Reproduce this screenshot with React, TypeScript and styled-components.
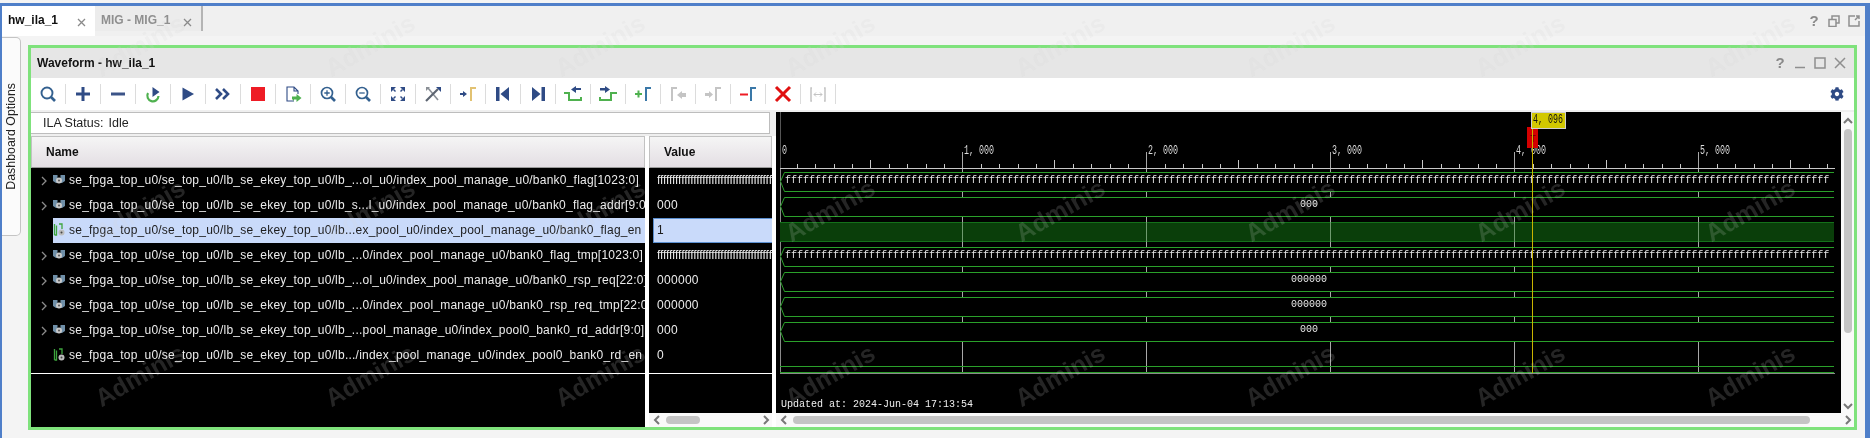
import React from "react";
import styled, { createGlobalStyle } from "styled-components";
import { FaCog } from "react-icons/fa";

const Global = createGlobalStyle`
  html, body { margin: 0; padding: 0; background: #f4f4f4; }
  body { font-family: "Liberation Sans", Arial, sans-serif; overflow: hidden; }
  * { box-sizing: border-box; }
`;

const Page = styled.div`
  position: relative;
  width: 1870px;
  height: 438px;
  padding-top: 3px;
  overflow: hidden;
  background: #f4f4f4;
`;
const Frame = styled.div`
  height: 435px;
  display: flex;
  flex-direction: column;
  border-top: 3px solid #4f7fc9;
  border-left: 2px solid #4f7fc9;
  border-right: 5px solid #4f7fc9;
`;
const TabBar = styled.div`
  height: 30px;
  flex: none;
  display: flex;
  align-items: flex-start;
  background: #f0f0f0;
`;
const Tab = styled.div<{ $active?: boolean }>`
  height: ${(p) => (p.$active ? "30px" : "25px")};
  width: ${(p) => (p.$active ? "93px" : "108px")};
  display: flex;
  align-items: flex-start;
  justify-content: space-between;
  padding: 7px 9px 0 6px;
  font-size: 12px;
  font-weight: 700;
  line-height: 14px;
  color: ${(p) => (p.$active ? "#111" : "#8f8f8f")};
  background: ${(p) => (p.$active ? "#fff" : "#ececec")};
  border-right: ${(p) => (p.$active ? "0" : "2px solid #b4b4b4")};
`;
const TabClose = styled.svg`
  width: 9px;
  height: 9px;
  margin-top: 5px;
  stroke: #8a8a8a;
  stroke-width: 1.3;
  fill: none;
`;
const WindowTools = styled.div<{ $gap: number }>`
  margin-left: auto;
  display: flex;
  align-items: center;
  gap: ${(p) => p.$gap}px;
  color: #8a8a8a;
`;
const BarTools = styled(WindowTools)`
  height: 30px;
  padding-right: 5px;
`;
const HelpMark = styled.span`
  width: 12px;
  text-align: center;
  font-size: 15px;
  font-weight: 700;
  line-height: 16px;
  color: #8a8a8a;
`;
const WinIcon = styled.svg`
  width: 12px;
  height: 12px;
  fill: none;
  stroke: #8f8f8f;
  stroke-width: 1.5;
`;
const Body = styled.div`
  flex: 1;
  min-height: 0;
  display: flex;
  background: #f4f4f4;
`;
const SideStrip = styled.div`
  width: 26px;
  flex: none;
  padding-top: 1px;
`;
const SideTab = styled.div`
  width: 19px;
  height: 199px;
  display: flex;
  align-items: center;
  justify-content: center;
  background: #fbfbfb;
  border: 1px solid #c4c4c4;
  border-left: 0;
  border-radius: 0 5px 5px 0;
`;
const SideLabel = styled.span`
  writing-mode: vertical-rl;
  transform: rotate(180deg);
  font-size: 12.4px;
  line-height: 15px;
  color: #222;
`;
const PanelSlot = styled.div`
  flex: 1;
  min-width: 0;
  padding: 9px 8px 8px 0;
`;
const Panel = styled.div`
  height: 385px;
  width: 1829px;
  display: flex;
  flex-direction: column;
  border: 3px solid #7fe27c;
  background: #fff;
`;
const PanelHeader = styled.div`
  height: 30px;
  flex: none;
  display: flex;
  align-items: center;
  padding: 0 8px 0 6px;
  background: #e6e6e6;
  font-size: 12px;
  font-weight: 700;
  color: #111;
`;
const PanelTools = styled(WindowTools)``;
const Toolbar = styled.div`
  height: 32px;
  flex: none;
  display: flex;
  align-items: center;
  background: #fff;
  padding-right: 10px;
`;
const ToolSlot = styled.div`
  width: 35px;
  height: 20px;
  flex: none;
  display: flex;
  align-items: center;
  justify-content: center;
  border-right: 1px solid #dcdcdc;
`;
const ToolIcon = styled.svg`
  width: 20px;
  height: 20px;
  display: block;
`;
const Gear = styled.div`
  margin-left: auto;
  display: flex;
  color: #2f4b85;
`;
const Content = styled.div`
  flex: 1;
  min-height: 0;
  display: flex;
  background: #efefef;
`;
const SignalPane = styled.div`
  width: 745px;
  flex: none;
  display: flex;
  flex-direction: column;
  padding-top: 2px;
`;
const StatusBox = styled.div`
  height: 22px;
  flex: none;
  margin-right: 6px;
  padding-left: 12px;
  display: flex;
  align-items: center;
  gap: 5px;
  background: #fff;
  border: 1px solid #bdbdbd;
  border-left: 0;
  font-size: 12.5px;
  color: #222;
`;
const Columns = styled.div`
  flex: 1;
  min-height: 0;
  margin-top: 2px;
  display: flex;
  gap: 4px;
  padding-right: 4px;
  background: #fff;
`;
const Column = styled.div<{ $w: number }>`
  width: ${(p) => p.$w}px;
  flex: none;
  display: flex;
  flex-direction: column;
  background: #000;
`;
const ColumnHead = styled.div<{ $pad: number }>`
  height: 32px;
  flex: none;
  display: flex;
  align-items: center;
  padding-left: ${(p) => p.$pad}px;
  font-size: 12px;
  font-weight: 700;
  color: #111;
  background: linear-gradient(#f5f5f5, #e3dee3);
  border: 1px solid #c2c2c2;
  border-bottom-color: #9a9a9a;
`;
const RowList = styled.div`
  height: 206px;
  flex: none;
  border-bottom: 1px solid #fff;
`;
const NameRow = styled.div`
  height: 25px;
  display: flex;
  align-items: center;
`;
const Expander = styled.div`
  width: 22px;
  flex: none;
  display: flex;
  justify-content: flex-end;
  padding-right: 6px;
`;
const ExpanderIcon = styled.svg`
  width: 6px;
  height: 10px;
  fill: none;
  stroke: #8c8c8c;
  stroke-width: 1.3;
`;
const NameCell = styled.div<{ $selected?: boolean }>`
  flex: 1;
  min-width: 0;
  height: 25px;
  display: flex;
  align-items: center;
  gap: 4px;
  padding-bottom: 2px;
  overflow: hidden;
  white-space: nowrap;
  font-size: 12px;
  letter-spacing: 0.23px;
  color: ${(p) => (p.$selected ? "#1c1c1c" : "#ececec")};
  background: ${(p) => (p.$selected ? "#c9dafa" : "transparent")};
`;
const SignalIcon = styled.svg`
  width: 12px;
  height: 13px;
  flex: none;
`;
const ValueRow = styled.div`
  height: 25px;
  padding-left: 4px;
  display: flex;
`;
const ValueCell = styled.div<{ $selected?: boolean }>`
  flex: 1;
  min-width: 0;
  display: flex;
  align-items: center;
  padding: 0 0 2px 3px;
  overflow: hidden;
  white-space: nowrap;
  font-size: 12px;
  letter-spacing: 0.3px;
  color: ${(p) => (p.$selected ? "#1c1c1c" : "#ececec")};
  background: ${(p) => (p.$selected ? "#c9dafa" : "transparent")};
  border: 1px solid ${(p) => (p.$selected ? "#5b8fd0" : "transparent")};
  border-right: 0;
`;
const HexRun = styled.span`
  letter-spacing: -0.1px;
`;
const Filler = styled.div`
  flex: 1;
`;
const HScroll = styled.div`
  height: 14px;
  flex: none;
  display: flex;
  align-items: center;
  background: #f9f9f9;
`;
const ScrollThumbH = styled.div<{ $ml: number; $w: number }>`
  width: ${(p) => p.$w}px;
  height: 8px;
  margin-left: ${(p) => p.$ml}px;
  border-radius: 4px;
  background: #c4c4c4;
`;
const ArrowIcon = styled.svg<{ $ml?: number }>`
  width: 8px;
  height: 10px;
  flex: none;
  margin-left: ${(p) => p.$ml ?? 0}px;
  fill: none;
  stroke: #777;
  stroke-width: 2;
`;
const WavePane = styled.div`
  flex: 1;
  min-width: 0;
  display: flex;
  flex-direction: column;
  padding-top: 2px;
`;
const WaveMain = styled.div`
  flex: 1;
  min-height: 0;
  display: flex;
`;
const WaveCanvas = styled.svg`
  width: 1065px;
  height: 301px;
  flex: none;
  display: block;
  background: #000;
`;
const VScroll = styled.div`
  flex: 1;
  display: flex;
  flex-direction: column;
  align-items: center;
  padding: 5px 0 3px;
  background: #f9f9f9;
`;
const ThumbV = styled.div`
  width: 8px;
  height: 204px;
  margin-top: 5px;
  border-radius: 4px;
  background: #c4c4c4;
`;
const VArrow = styled.svg`
  width: 10px;
  height: 7px;
  flex: none;
  fill: none;
  stroke: #777;
  stroke-width: 2;
`;
const WatermarkLayer = styled.div<{ $color: string; $blend: string }>`
  position: absolute;
  left: 25px;
  top: -37px;
  display: grid;
  grid-template-columns: repeat(8, 230px);
  grid-auto-rows: 165px;
  pointer-events: none;
  color: ${(p) => p.$color};
  mix-blend-mode: ${(p) => p.$blend};
`;
const Mark = styled.div`
  display: flex;
  align-items: center;
  justify-content: center;
  font-size: 25px;
  font-weight: 700;
  transform: rotate(-30deg);
`;

const NAVY = "#2f4b85";
const GREEN = "#4fb14f";
const BLUE = "#3a78a8";
const GREY = "#c4c4c4";

const gamma = (c: string) => <path d="M13 17V4h5" fill="none" stroke={c} strokeWidth="2" />;
const toolIcons: React.ReactNode[] = [
  <g fill="none" stroke="#33608f"><circle cx="9" cy="9" r="5.5" strokeWidth="1.9" /><path d="M13 13l4 4" strokeWidth="2.6" /></g>,
  <path d="M10 3v14M3 10h14" fill="none" stroke={NAVY} strokeWidth="3" />,
  <path d="M3 10h14" fill="none" stroke="#3c5488" strokeWidth="3" />,
  <g><path d="M5 9a5.6 5.6 0 1 0 10.5 3" fill="none" stroke={GREEN} strokeWidth="2.2" /><path d="M9.5 3l7 5-7 5z" fill={NAVY} /></g>,
  <path d="M4.5 3.5L16 10 4.5 16.5z" fill={NAVY} />,
  <path d="M3 5l5 5-5 5M10 5l5 5-5 5" fill="none" stroke={NAVY} strokeWidth="2.6" />,
  <rect x="3" y="3" width="14" height="14" fill="#ee1c25" />,
  <g><path d="M11 17H4V3h7l4 4v3M11 3v4h4" fill="none" stroke={NAVY} strokeWidth="1.1" /><path d="M9 15v-2.5h4.5V10l5 4-5 4v-2.5H11V17z" fill={GREEN} /></g>,
  <g fill="none" stroke="#33608f"><circle cx="9" cy="9" r="5.5" strokeWidth="1.7" /><path d="M13 13l4 4" strokeWidth="2.6" /><path d="M6.3 9h5.4M9 6.3v5.4" strokeWidth="1.3" /></g>,
  <g fill="none" stroke="#33608f"><circle cx="9" cy="9" r="5.5" strokeWidth="1.7" /><path d="M13 13l4 4" strokeWidth="2.6" /><path d="M6.3 9h5.4" strokeWidth="1.3" /></g>,
  <g fill={NAVY}><path d="M3 3h5L3 8zM17 3v5l-5-5zM3 17v-5l5 5zM17 17h-5l5-5z" /><path d="M6 5l2 2-1 1-2-2zM14 5l1 1-2 2-1-1zM6 15l-1-1 2-2 1 1zM14 15l-2-2 1-1 2 2z" /></g>,
  <g fill="none"><path d="M5 4l10 12" stroke="#8a8f96" strokeWidth="1.6" /><path d="M3 17L15 5" stroke="#5c6470" strokeWidth="2.2" /><path d="M13 3h5v5z" fill={NAVY} /><path d="M3 3h4L3 7z" fill="#8a8f96" /></g>,
  <g><path d="M2 9h3V7l4 3-4 3v-2H2z" fill={NAVY} />{gamma("#e2c272")}</g>,
  <path d="M3 3h3.500v14H3zM16 3v14L7.500 10z" fill={NAVY} />,
  <path d="M17 3h-3.500v14H17zM4 3v14l8.500-7z" fill={NAVY} />,
  <g><path d="M1 9h5v7h12v-3" fill="none" stroke={GREEN} strokeWidth="2" /><path d="M18 6h-5v3L8 5.500 13 2v2h5z" fill={NAVY} /></g>,
  <g><path d="M2 13v3h11V9h6" fill="none" stroke={GREEN} strokeWidth="2" /><path d="M2 4h5V2l5 3.500L7 9V6.500H2z" fill={NAVY} /></g>,
  <g><path d="M2 10h7M5.500 6.500v7" fill="none" stroke={GREEN} strokeWidth="2" />{gamma(BLUE)}</g>,
  <g><path d="M4 17V4h5" fill="none" stroke={GREY} strokeWidth="2" /><path d="M18 9h-4V7l-5 4 5 4v-2h4z" fill={GREY} /></g>,
  <g><path d="M2 9h4V7l4 3.500L6 14v-2H2z" fill={GREY} />{gamma(GREY)}</g>,
  <g><path d="M2 10.500h8" fill="none" stroke="#ee1c25" strokeWidth="2" />{gamma(BLUE)}</g>,
  <path d="M3 3l14 14M17 3L3 17" fill="none" stroke="#e01010" strokeWidth="3" />,
  <g fill="none" stroke={GREY}><path d="M4 4h-1v13h1M16 4h1v13h-1" strokeWidth="1.5" /><path d="M6 10.500h8M8 8.500l-2 2 2 2M12 8.500l2 2-2 2" strokeWidth="1" /></g>,
];

const prefix = "se_fpga_top_u0/se_top_u0/lb_se_ekey_top_u0/";
const F = "f".repeat(90);
const signals = [
  { name: "lb_...ol_u0/index_pool_manage_u0/bank0_flag[1023:0]", value: F, bus: true },
  { name: "lb_s...l_u0/index_pool_manage_u0/bank0_flag_addr[9:0]", value: "000", bus: true },
  { name: "lb...ex_pool_u0/index_pool_manage_u0/bank0_flag_en", value: "1", bus: false, selected: true },
  { name: "lb_...0/index_pool_manage_u0/bank0_flag_tmp[1023:0]", value: F, bus: true },
  { name: "lb_...ol_u0/index_pool_manage_u0/bank0_rsp_req[22:0]", value: "000000", bus: true },
  { name: "lb_...0/index_pool_manage_u0/bank0_rsp_req_tmp[22:0]", value: "000000", bus: true },
  { name: "lb_...pool_manage_u0/index_pool0_bank0_rd_addr[9:0]", value: "000", bus: true },
  { name: "lb.../index_pool_manage_u0/index_pool0_bank0_rd_en", value: "0", bus: false },
];

const BusIcon = () => (
  <SignalIcon viewBox="0 0 12 13">
    <path d="M0 2h4.500v3H7.500V2H12v6l-3 2H3L0 8z" fill="#6f8fa8" />
    <circle cx="6" cy="7.500" r="3" fill="#c9c9c9" />
    <circle cx="6" cy="7.500" r="1" fill="#555" />
  </SignalIcon>
);
const BitIcon = () => (
  <SignalIcon viewBox="0 0 12 13">
    <path d="M1.500 12V1M1.500 12h2V2.500M6 1h3v5" fill="none" stroke="#3ea53e" strokeWidth="1.3" />
    <circle cx="8.500" cy="9.500" r="3" fill="#bdbdbd" />
    <circle cx="8.500" cy="9.500" r="1" fill="#444" />
  </SignalIcon>
);

const WAVE_LEFT = 780;
const WAVE_RIGHT = 1834;
const ORIGIN = 778.3;
const PITCH = 184;
const MINOR = PITCH / 10;
const majors = [1, 2, 3, 4, 5].map((i) => Math.round(ORIGIN + i * PITCH));
const minors: number[] = [];
for (let i = 1; i * MINOR + ORIGIN < WAVE_RIGHT; i++) minors.push(i);
const labels = ["1, 000", "2, 000", "3, 000", "4, 000", "5, 000"];
const busTops = [172, 197, 247, 272, 297, 322];
const busPath = (t: number) =>
  `M${WAVE_RIGHT} ${t}.5H784.500L780.500 ${t + 9}.5L784.500 ${t + 19}.5H${WAVE_RIGHT}`;
const monoFont = '"Liberation Mono", "DejaVu Sans Mono", monospace';

const WaveDrawing = () => (
  <WaveCanvas viewBox="776 112 1065 301" shapeRendering="crispEdges">
    <path d="M780.500 112V168" stroke="#555" />
    <path d="M780.500 168V373" stroke="#8a8a8a" />
    {majors.map((x) => (
      <path key={x} d={`M${x}.5 152V373`} stroke="#a8a8a8" />
    ))}
    {minors.map((i) =>
      i % 10 === 0 ? null : (
        <path
          key={i}
          d={`M${Math.round(ORIGIN + i * MINOR)}.5 ${i % 5 === 0 ? 160 : 164}V168`}
          stroke="#c8c8c8"
        />
      ),
    )}
    <path d={`M780 168.500H${WAVE_RIGHT + 1}`} stroke="#c8c8c8" />
    <text x="782" y={154} fontFamily={monoFont} fontSize="12" fill="#dcdcdc" shapeRendering="auto" textLength="5" lengthAdjust="spacingAndGlyphs">
      0
    </text>
    {labels.map((l, i) => (
      <text
        key={l}
        x={majors[i] + 2}
        y={154}
        fontFamily={monoFont}
        fontSize="12"
        fill="#dcdcdc"
        shapeRendering="auto"
        textLength={l.length * 5}
        lengthAdjust="spacingAndGlyphs"
      >
        {l}
      </text>
    ))}
    {busTops.map((t) => (
      <g key={t}>
        <path d={`${busPath(t)}V${t}Z`} fill="#000" stroke="none" />
        <path d={busPath(t)} fill="none" stroke="#2aa02a" shapeRendering="auto" />
      </g>
    ))}
    <rect x="780" y="222" width={WAVE_RIGHT - 780} height="20" fill="#0a3e0a" />
    <path d={`M780 222.500H${WAVE_RIGHT}M780 241.500H${WAVE_RIGHT}`} stroke="#14701a" />
    {majors.map((x) => (
      <path key={x} d={`M${x}.5 222V242`} stroke="#6f9a6f" />
    ))}
    <path d={`M780 366.500H${WAVE_RIGHT}M780 372.500H${WAVE_RIGHT}`} stroke="#2aa02a" />
    <path d={`M780 373.500H${WAVE_RIGHT + 1}`} stroke="#8a8a8a" />
    {[172, 247].map((t) => (
      <text key={t} x="785" y={t + 11} fontFamily={monoFont} fontSize="10" fill="#e6e6e6" shapeRendering="auto">
        {"f".repeat(174)}
      </text>
    ))}
    {[
      [204, "000"],
      [279, "000000"],
      [304, "000000"],
      [329, "000"],
    ].map(([y, v]) => (
      <text key={y as number} x="1309" y={(y as number) + 3} textAnchor="middle" fontFamily={monoFont} fontSize="10" fill="#e6e6e6" shapeRendering="auto">
        {v}
      </text>
    ))}
    <path d="M1532.500 112V373" stroke="#c9b400" />
    <rect x="1527" y="127" width="11" height="21" fill="#d40000" />
    <text x="1530" y="142" fontFamily={monoFont} fontSize="10" fill="#5a0000">T</text>
    <path d="M1532.500 127V148" stroke="#c9b400" />
    <rect x="1531.500" y="112.500" width="34" height="15.500" fill="#d2c800" stroke="#cfcfcf" />
    <text x="1533" y="123" fontFamily={monoFont} fontSize="12" fill="#111" textLength="30" lengthAdjust="spacingAndGlyphs">4, 096</text>
    <text x="781" y="407" fontFamily={monoFont} fontSize="10" fill="#eee" shapeRendering="auto">
      Updated at: 2024-Jun-04 17:13:54
    </text>
  </WaveCanvas>
);

const Chevron = ({ dir, ml }: { dir: "l" | "r"; ml?: number }) => (
  <ArrowIcon viewBox="0 0 8 10" $ml={ml}>
    <path d={dir === "l" ? "M6 1L2 5l4 4" : "M2 1l4 4-4 4"} />
  </ArrowIcon>
);

const Watermarks = ({ color, blend }: { color: string; blend: string }) => (
  <WatermarkLayer $color={color} $blend={blend} aria-hidden>
    {Array.from({ length: 24 }, (_, i) => (
      <Mark key={i}>Adminis</Mark>
    ))}
  </WatermarkLayer>
);

const CloseX = () => (
  <TabClose viewBox="0 0 9 9">
    <path d="M1 1l7 7M8 1L1 8" />
  </TabClose>
);

export default function App() {
  return (
    <Page>
      <Global />
      <Frame>
        <TabBar>
          <Tab $active>
            hw_ila_1
            <CloseX />
          </Tab>
          <Tab>
            MIG - MIG_1
            <CloseX />
          </Tab>
          <BarTools $gap={8}>
            <HelpMark>?</HelpMark>
            <WinIcon viewBox="0 0 12 12"><path d="M1 4.500h7v7H1zM4 4.500V1h7v7H8" /></WinIcon>
            <WinIcon viewBox="0 0 12 12"><path d="M7 1H1v10h10V6M7 5l4-4M8 1h3v3" /></WinIcon>
          </BarTools>
        </TabBar>
        <Body>
          <SideStrip>
            <SideTab>
              <SideLabel>Dashboard Options</SideLabel>
            </SideTab>
          </SideStrip>
          <PanelSlot>
            <Panel>
              <PanelHeader>
                Waveform - hw_ila_1
                <PanelTools $gap={8}>
                  <HelpMark>?</HelpMark>
                  <WinIcon viewBox="0 0 12 12"><path d="M1 10.500h10" /></WinIcon>
                  <WinIcon viewBox="0 0 12 12"><path d="M1 1h10v10H1z" /></WinIcon>
                  <WinIcon viewBox="0 0 12 12"><path d="M1 1l10 10M11 1L1 11" /></WinIcon>
                </PanelTools>
              </PanelHeader>
              <Toolbar>
                {toolIcons.map((icon, i) => (
                  <ToolSlot key={i}>
                    <ToolIcon viewBox="0 0 20 20">{icon}</ToolIcon>
                  </ToolSlot>
                ))}
                <Gear>
                  <FaCog size={14} />
                </Gear>
              </Toolbar>
              <Content>
                <SignalPane>
                  <StatusBox>
                    <span>ILA Status:</span>
                    <span>Idle</span>
                  </StatusBox>
                  <Columns>
                    <Column $w={614}>
                      <ColumnHead $pad={14}>Name</ColumnHead>
                      <RowList>
                        {signals.map((s) => (
                          <NameRow key={s.name}>
                            <Expander>
                              {s.bus && (
                                <ExpanderIcon viewBox="0 0 6 10">
                                  <path d="M1 1l4 4-4 4" />
                                </ExpanderIcon>
                              )}
                            </Expander>
                            <NameCell $selected={s.selected}>
                              {s.bus ? <BusIcon /> : <BitIcon />}
                              <span>{prefix + s.name}</span>
                            </NameCell>
                          </NameRow>
                        ))}
                      </RowList>
                    </Column>
                    <Column $w={123}>
                      <ColumnHead $pad={14}>Value</ColumnHead>
                      <RowList>
                        {signals.map((s) => (
                          <ValueRow key={s.name}>
                            <ValueCell $selected={s.selected}>
                              {s.value === F ? <HexRun>{s.value}</HexRun> : s.value}
                            </ValueCell>
                          </ValueRow>
                        ))}
                      </RowList>
                      <Filler />
                      <HScroll>
                        <Chevron dir="l" ml={4} />
                        <ScrollThumbH $ml={5} $w={34} />
                        <Chevron dir="r" ml={62} />
                      </HScroll>
                    </Column>
                  </Columns>
                </SignalPane>
                <WavePane>
                  <WaveMain>
                    <WaveDrawing />
                    <VScroll>
                      <VArrow viewBox="0 0 10 7"><path d="M1 6l4-4 4 4" /></VArrow>
                      <ThumbV />
                      <Filler />
                      <VArrow viewBox="0 0 10 7"><path d="M1 1l4 4 4-4" /></VArrow>
                    </VScroll>
                  </WaveMain>
                  <HScroll>
                    <Chevron dir="l" ml={4} />
                    <ScrollThumbH $ml={5} $w={1017} />
                    <Chevron dir="r" ml={34} />
                  </HScroll>
                </WavePane>
              </Content>
            </Panel>
          </PanelSlot>
        </Body>
      </Frame>
      <Watermarks color="#262626" blend="screen" />
      <Watermarks color="#f8f8f8" blend="multiply" />
    </Page>
  );
}
